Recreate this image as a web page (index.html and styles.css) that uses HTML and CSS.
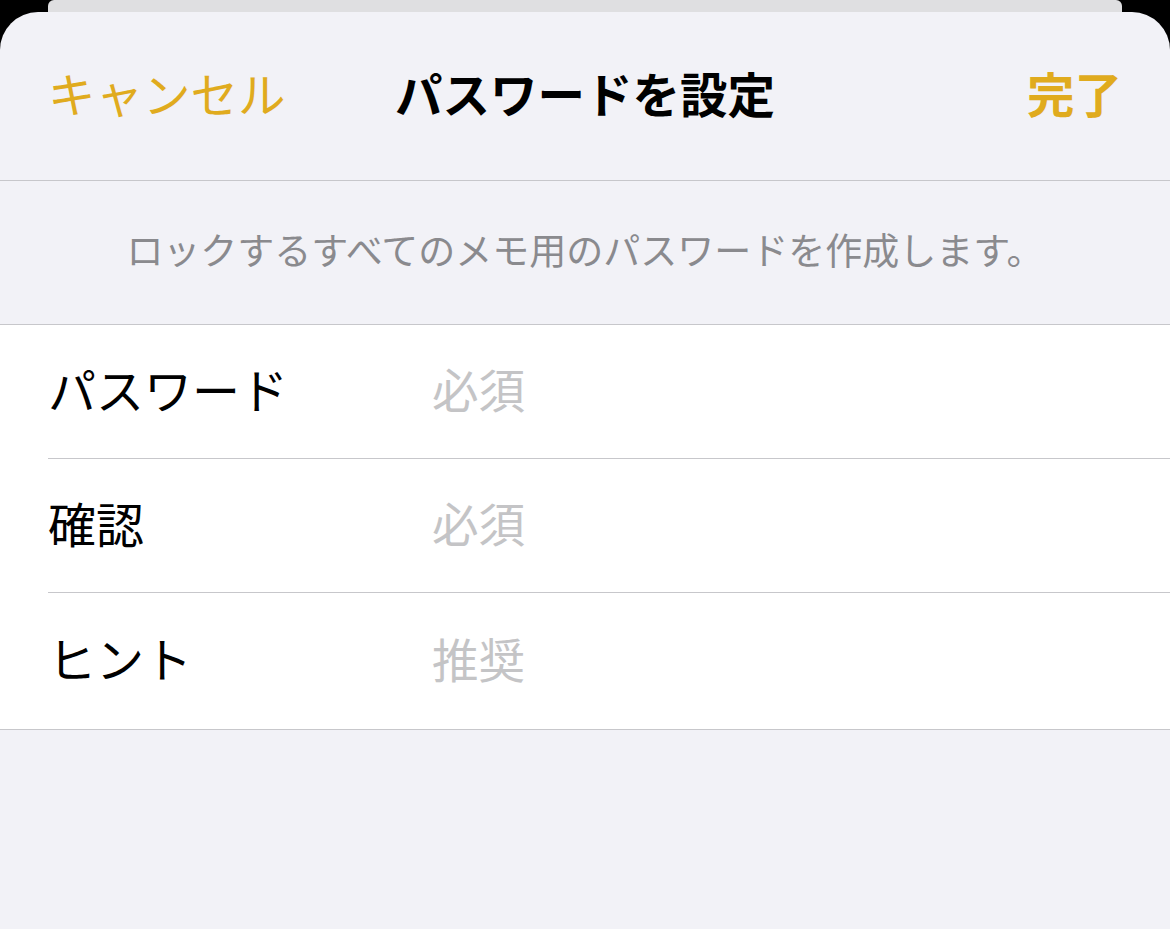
FILE: index.html
```html
<!DOCTYPE html>
<html lang="ja">
<head>
  <meta charset="UTF-8" />
  <meta name="viewport" content="width=device-width, initial-scale=1.0"/>
  <title>パスワードを設定</title>
  <link rel="stylesheet" href="styles.css">
</head>
<body>

  <div class="back-card"></div>

  <div class="sheet">
    <div class="nav">
      <button class="nav-btn cancel">キャンセル</button>
      <h1 class="nav-title">パスワードを設定</h1>
      <button class="nav-btn done">完了</button>
    </div>

    <p class="note">ロックするすべてのメモ用のパスワードを作成します。</p>

    <div class="group">
      <label class="row">
        <span class="row-label">パスワード</span>
        <input class="row-input" type="password" placeholder="必須">
      </label>
      <label class="row">
        <span class="row-label">確認</span>
        <input class="row-input" type="password" placeholder="必須">
      </label>
      <label class="row">
        <span class="row-label">ヒント</span>
        <input class="row-input" type="text" placeholder="推奨">
      </label>
    </div>
  </div>

</body>
</html>
```

FILE: styles.css
```css
:root {
  --sheet-bg: #f2f2f7;
  --back-card: #dfdfe1;
  --accent: #e0ab1e;
  --separator: #c7c7cb;
  --secondary: #8a8a8e;
  --placeholder: #c4c4c6;
}

* {
  box-sizing: border-box;
}

body {
  margin: 0;
  height: 100vh;
  background: #000;
  font-family: "Noto Sans CJK JP", "Noto Sans", sans-serif;
  display: flex;
  flex-direction: column;
  overflow: hidden;
}

/* the sheet peeking out behind the one on top */
.back-card {
  height: 12px;
  margin: 0 48px 0 48px;
  background: var(--back-card);
  border-radius: 6px 6px 0 0;
  flex-shrink: 0;
}

.sheet {
  flex: 1;
  background: var(--sheet-bg);
  border-radius: 38px 38px 0 0;
}

.nav {
  height: 169px;
  display: grid;
  grid-template-columns: 1fr auto 1fr;
  align-items: center;
  padding: 0 48px 8px;
  border-bottom: 1px solid var(--separator);
}

.nav-btn {
  border: none;
  background: none;
  padding: 0;
  font-family: inherit;
  font-size: 47.5px;
  color: var(--accent);
  cursor: pointer;
}

.cancel {
  justify-self: start;
}

.done {
  justify-self: end;
  font-weight: 700;
}

.nav-title {
  margin: 0;
  font-size: 47.5px;
  font-weight: 700;
  color: #000;
}

.note {
  margin: 0;
  height: 143px;
  display: flex;
  align-items: center;
  justify-content: center;
  font-size: 37px;
  color: var(--secondary);
  padding-bottom: 7px;
}

.group {
  background: #fff;
  border-top: 1px solid var(--separator);
  border-bottom: 1px solid var(--separator);
}

.row {
  display: flex;
  align-items: center;
  height: 134px;
  margin-left: 48px;
  padding-bottom: 8px;
  border-bottom: 1px solid var(--separator);
}

.row:last-child {
  border-bottom: none;
  height: 136px;
}

.row-label {
  width: 384px;
  font-size: 48px;
  color: #000;
}

.row-input {
  flex: 1;
  border: none;
  outline: none;
  background: none;
  padding: 0;
  font-family: inherit;
  font-size: 46.5px;
}

.row-input::placeholder {
  color: var(--placeholder);
}
```
